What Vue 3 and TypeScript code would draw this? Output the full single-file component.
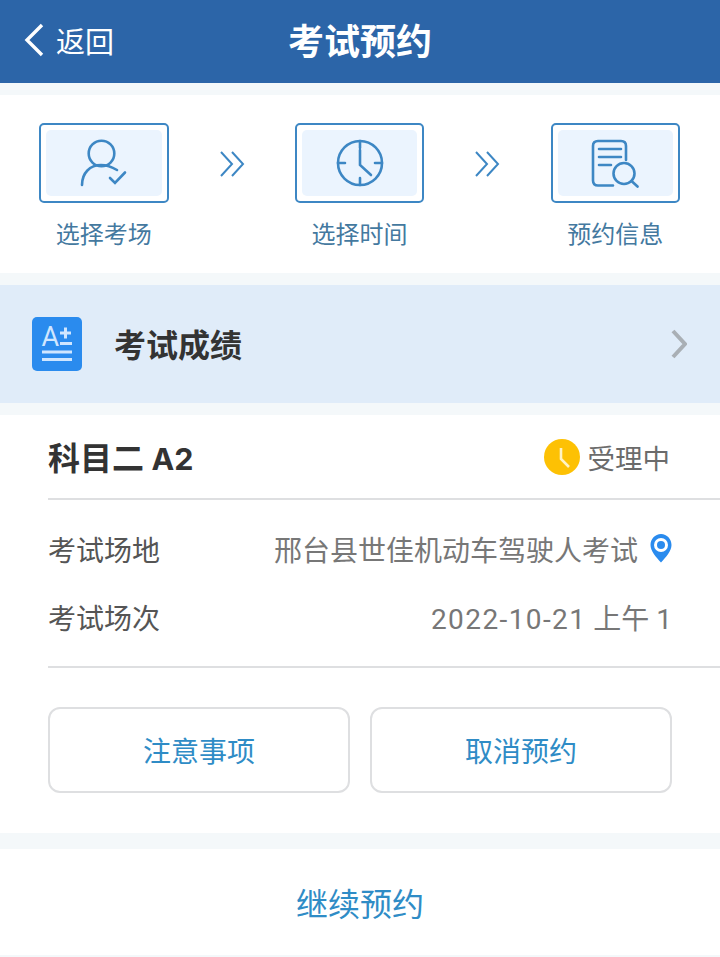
<template>
  <div class="page">
    <header class="top">
      <div class="back">
        <svg class="back-icon" viewBox="0 0 22 34" width="22" height="34">
          <path d="M19 2 L4 17 L19 32" fill="none" stroke="#fff" stroke-width="3.400" />
        </svg>
        <span>返回</span>
      </div>
      <h1>考试预约</h1>
    </header>

    <section class="steps">
      <template v-for="(step, i) in steps" :key="step">
        <div class="step">
          <div class="step-box">
            <div class="step-inner">
              <svg v-if="i === 0" viewBox="0 0 50 50" width="50" height="50" class="line-icon">
                <circle cx="22.500" cy="15.500" r="12.800" />
                <path d="M3 47 C3 35 11 27 22 27 C28 27 33 29 38 32" />
                <path d="M31 40 L36 45 L46 34.500" />
              </svg>
              <svg v-else-if="i === 1" viewBox="0 0 50 50" width="50" height="50" class="line-icon">
                <circle cx="25" cy="25" r="22" />
                <path d="M25 3 V10 M25 40 V47 M3 25 H10 M40 25 H47" />
                <path d="M25 12 V27 L36 37" />
              </svg>
              <svg v-else viewBox="0 0 50 50" width="50" height="50" class="line-icon">
                <path d="M23 47.500 H8 Q3 47.500 3 42.500 V8 Q3 3 8 3 H31 Q36 3 36 8 V22" />
                <path d="M9 11 H31 M9 19 H31 M9 27 H21" />
                <circle cx="34" cy="35.500" r="10.500" />
                <path d="M41.500 43 L47.500 48.500" />
              </svg>
            </div>
          </div>
          <span class="step-label">{{ step }}</span>
        </div>
        <svg v-if="i < steps.length - 1" class="arrows" viewBox="0 0 26 26" width="26" height="26">
          <path d="M2 1 L13 13 L2 25 M13 1 L24 13 L13 25" />
        </svg>
      </template>
    </section>

    <section class="score">
      <svg class="score-icon" viewBox="0 0 50 54" width="50" height="54">
        <rect width="50" height="54" rx="5" fill="#2a8bee" />
        <text x="9.500" y="29" class="score-a">A</text>
        <path d="M28 16 H39 M33.500 10.500 V21.500 M28 26.500 H40 M10 35 H40 M10 42.500 H40" stroke="#cfe6ff" stroke-width="3" fill="none" />
      </svg>
      <span class="score-title">考试成绩</span>
      <svg class="chevron" viewBox="0 0 16 30" width="16" height="30">
        <path d="M2 2 L14 15 L2 28" fill="none" stroke="#a9afb5" stroke-width="4" />
      </svg>
    </section>

    <section class="card">
      <div class="card-head">
        <span class="subject">科目二 <span class="subject-code">A2</span></span>
        <div class="status">
          <svg viewBox="0 0 36 36" width="36" height="36">
            <circle cx="18" cy="18" r="18" fill="#fdc104" />
            <path d="M17 9 V20 L25 28" fill="none" stroke="#fff3c4" stroke-width="2.600" />
          </svg>
          <span>受理中</span>
        </div>
      </div>
      <div class="rows">
        <div class="row">
          <span class="row-key">考试场地</span>
          <span class="row-value">
            邢台县世佳机动车驾驶人考试
            <svg viewBox="0 0 22 30" width="22" height="30" class="pin">
              <path d="M11 1 C5 1 .5 6 .5 12 C.5 18 6 24 11 29.500 C16 24 21.500 18 21.500 12 C21.500 6 17 1 11 1 Z" fill="#2a8bee" />
              <circle cx="11" cy="12" r="7" fill="#fff" />
              <circle cx="11" cy="12" r="4" fill="#2a8bee" />
            </svg>
          </span>
        </div>
        <div class="row">
          <span class="row-key">考试场次</span>
          <span class="row-value date"><span><span class="date-num">2022-10-21</span> 上午 1</span></span>
        </div>
      </div>
      <div class="actions">
        <button type="button">注意事项</button>
        <button type="button">取消预约</button>
      </div>
    </section>

    <section class="more">继续预约</section>
  </div>
</template>

<script setup lang="ts">
const steps: string[] = ["选择考场", "选择时间", "预约信息"];
</script>

<style>
html,
body {
  background: #f4f8fa;
}
</style>

<style scoped>
.page {
  width: 720px;
  height: 957px;
  overflow: hidden;
  background: #f4f8fa;
  font-family: "Noto Sans CJK SC", "Roboto", sans-serif;
}

.top {
  height: 83px;
  background: #2c65a8;
  color: #fff;
  display: flex;
  align-items: center;
  justify-content: center;
  position: relative;
}

.top h1 {
  margin: 0 0 5px;
  font-size: 36px;
  font-weight: 700;
}

.back {
  position: absolute;
  left: 23px;
  top: 23px;
  display: flex;
  align-items: center;
  gap: 11px;
  font-size: 29px;
  line-height: 34px;
}

.back-icon {
  display: block;
}

.steps {
  margin-top: 12px;
  height: 178px;
  background: #fff;
  display: flex;
  align-items: flex-start;
  padding: 28px 40px 0 39px;
  box-sizing: border-box;
  justify-content: space-between;
}

.step {
  width: 129.500px;
  display: flex;
  flex-direction: column;
  align-items: center;
}

.step-box {
  width: 129.500px;
  height: 80px;
  box-sizing: border-box;
  border: 2px solid #3d87c4;
  border-radius: 5px;
  padding: 5px;
}

.step-inner {
  height: 100%;
  background: #ebf4fe;
  border-radius: 5px;
  display: flex;
  align-items: center;
  justify-content: center;
}

.line-icon {
  fill: none;
  stroke: #3d87c4;
  stroke-width: 2.600;
  stroke-linecap: round;
}

.step-label {
  margin-top: 13px;
  font-size: 24px;
  line-height: 34px;
  color: #44799f;
}

.arrows {
  margin-top: 28px;
  fill: none;
  stroke: #3d87c4;
  stroke-width: 2;
}

.score {
  margin-top: 12px;
  height: 118px;
  background: #e0ecf9;
  display: flex;
  align-items: center;
  padding: 0 33px 0 32px;
  box-sizing: border-box;
}

.score-a {
  fill: #cfe6ff;
  font-size: 27px;
  font-family: "Roboto", sans-serif;
}

.score-title {
  margin: 0 0 2px 32px;
  font-size: 32px;
  font-weight: 700;
  color: #333;
  flex: 1;
}

.card {
  margin-top: 12px;
  height: 418px;
  background: #fff;
  padding-left: 48px;
  box-sizing: border-box;
}

.card-head {
  height: 83px;
  border-bottom: 2px solid #dedfe1;
  display: flex;
  align-items: center;
  justify-content: space-between;
  padding-right: 50px;
}

.subject {
  margin-bottom: 2px;
  font-size: 32px;
  font-weight: 700;
  color: #333;
  font-family: "Inter", "Noto Sans CJK SC", sans-serif;
}

.subject-code {
  font-size: 30.500px;
}

.status {
  display: flex;
  align-items: center;
  gap: 8px;
  font-size: 27.500px;
  color: #6b6b6b;
}

.rows {
  height: 168px;
  border-bottom: 2px solid #dedfe1;
  box-sizing: border-box;
  padding: 15px 48px 0 0;
}

.row {
  height: 68px;
  display: flex;
  align-items: center;
  justify-content: space-between;
  font-size: 28px;
}

.row-key {
  color: #555;
}

.row-value {
  color: #777;
  display: flex;
  align-items: center;
  gap: 12px;
}

.date {
  font-family: "Roboto", "Noto Sans CJK SC", sans-serif;
}

.date-num {
  letter-spacing: 1.400px;
}

.pin {
  margin-top: -3px;
}

.actions {
  display: flex;
  gap: 20px;
  padding-top: 39px;
}

.actions button {
  width: 302px;
  height: 86px;
  background: #fff;
  border: 2px solid #dedfe1;
  border-radius: 12px;
  color: #2f8cc6;
  font-family: inherit;
  font-size: 28px;
}

.more {
  margin-top: 16px;
  height: 106px;
  background: #fff;
  display: flex;
  align-items: center;
  justify-content: center;
  color: #2f8cc6;
  font-size: 32px;
}
</style>
